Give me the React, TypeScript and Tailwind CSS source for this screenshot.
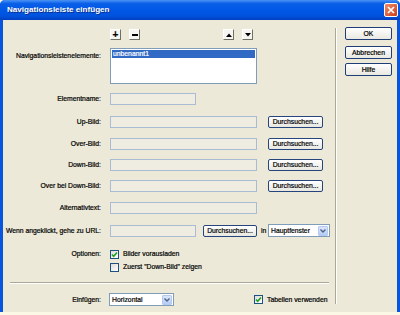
import React from 'react';

const Label: React.FC<{ text: string }> = ({ text }) => (
  <div className="w-[98px] shrink-0 text-right leading-[10px]">{text}</div>
);

const Field: React.FC<{ w: string }> = ({ w }) => (
  <div className={`h-[12px] ${w} shrink-0 border border-[#A9BCD4] bg-[#EFECE1]`} />
);

const BrowseButton: React.FC<{ className?: string }> = ({ className = '' }) => (
  <div
    className={`h-[12px] shrink-0 rounded-[2px] border border-[#27457D] bg-gradient-to-b from-white to-[#E8E7E0] text-center leading-[10px] ${className}`}
  >
    Durchsuchen...
  </div>
);

const Checkbox: React.FC<{ checked?: boolean }> = ({ checked }) => (
  <div className="flex h-[9px] w-[9px] shrink-0 items-center justify-center border border-[#1C5180] bg-gradient-to-br from-[#DCDCD7] to-white">
    {checked && (
      <svg width="7" height="7" viewBox="0 0 7 7">
        <path d="M1 3.5 L2.7 5.3 L6 1.5" fill="none" stroke="#21A121" strokeWidth="1.6" />
      </svg>
    )}
  </div>
);

const Select: React.FC<{ text: string; w: string }> = ({ text, w }) => (
  <div className={`flex h-[13px] ${w} shrink-0 items-center border border-[#7F9DB9] bg-white`}>
    <span className="flex-1 pl-[2px] leading-[10px]">{text}</span>
    <div className="mr-px flex h-[10px] w-[10px] items-center justify-center rounded-[1px] border border-[#B5C8EE] bg-gradient-to-b from-[#DCE6FC] to-[#B5CBF7]">
      <svg width="6" height="4" viewBox="0 0 6 4">
        <path d="M0.5 0.5 L3 3 L5.5 0.5" fill="none" stroke="#4D6185" strokeWidth="1.3" />
      </svg>
    </div>
  </div>
);

const SmallButton: React.FC<{ children: React.ReactNode; className?: string }> = ({ children, className = '' }) => (
  <div
    className={`flex h-[11px] w-[11px] shrink-0 items-center justify-center border-b border-r border-t border-l border-b-[#716F64] border-r-[#716F64] border-t-white border-l-white bg-[#F6F5F1] ${className}`}
  >
    {children}
  </div>
);

const DialogButton: React.FC<{ text: string; className?: string }> = ({ text, className = '' }) => (
  <div
    className={`h-[13px] w-[47px] rounded-[2px] border border-[#1F3E77] bg-gradient-to-b from-white to-[#E9E8E1] text-center leading-[11px] ${className}`}
  >
    {text}
  </div>
);

const App: React.FC = () => {
  return (
    <div className="h-[315px] w-[400px] bg-[#FBF9E6] font-['Liberation_Sans',Arial,sans-serif] text-[6.8px] text-black [-webkit-text-stroke:0.2px_currentColor]">
      <div className="flex h-[312px] flex-col overflow-hidden rounded-t-[5px] bg-[#0A55DD]">
        {/* title bar */}
        <div className="flex h-[20px] shrink-0 items-center bg-[linear-gradient(to_bottom,#4A93F5_0%,#0A5FE8_18%,#0058E6_50%,#0052DD_80%,#003FC0_100%)] pl-[7px] pr-[2px]">
          <span className="flex-1 text-[8.1px] font-bold text-white [-webkit-text-stroke:0] [text-shadow:1px_1px_0_#0B2E8A]">
            Navigationsleiste einfügen
          </span>
          <div className="flex h-[14px] w-[14px] items-center justify-center rounded-[2px] border border-white bg-gradient-to-br from-[#EE8A68] to-[#CC3C17]">
            <svg width="8" height="8" viewBox="0 0 8 8">
              <path d="M1 1 L7 7 M7 1 L1 7" stroke="white" strokeWidth="1.7" />
            </svg>
          </div>
        </div>

        {/* body */}
        <div className="mx-[3px] flex flex-1 bg-[#ECE9D8]">
          {/* left part */}
          <div className="flex w-[332px] shrink-0 flex-col">
            {/* +/- and arrows */}
            <div className="mt-[9px] flex h-[11px] items-center">
              <div className="w-[107px] shrink-0" />
              <SmallButton>
                <span className="text-[10px] font-bold leading-[10px]">+</span>
              </SmallButton>
              <SmallButton className="ml-[8px]">
                <div className="h-[2px] w-[6px] bg-black" />
              </SmallButton>
              <SmallButton className="ml-[83px]">
                <svg width="6" height="4" viewBox="0 0 6 4">
                  <path d="M0 4 L3 0.5 L6 4 Z" fill="black" />
                </svg>
              </SmallButton>
              <SmallButton className="ml-[8px]">
                <svg width="6" height="4" viewBox="0 0 6 4">
                  <path d="M0 0 L3 3.5 L6 0 Z" fill="black" />
                </svg>
              </SmallButton>
            </div>

            {/* list */}
            <div className="mt-[8px] flex">
              <div className="mt-[3px]">
                <Label text="Navigationsleistenelemente:" />
              </div>
              <div className="ml-[9px] h-[36px] w-[147px] shrink-0 border border-[#7F9DB9] bg-white p-px">
                <div className="h-[8px] bg-[#316AC5] pl-px leading-[8px] text-white">unbenannt1</div>
              </div>
            </div>

            {/* Elementname */}
            <div className="mt-[9px] flex items-center">
              <Label text="Elementname:" />
              <div className="ml-[9px]">
                <Field w="w-[86px]" />
              </div>
            </div>

            {[
              { label: 'Up-Bild:', mt: 'mt-[11px]' },
              { label: 'Over-Bild:', mt: 'mt-[10px]' },
              { label: 'Down-Bild:', mt: 'mt-[9px]' },
              { label: 'Over bei Down-Bild:', mt: 'mt-[9px]' },
            ].map(row => (
              <div key={row.label} className={`${row.mt} flex items-center`}>
                <Label text={row.label} />
                <div className="ml-[9px]">
                  <Field w="w-[147px]" />
                </div>
                <BrowseButton className="ml-[11px] w-[55px]" />
              </div>
            ))}

            {/* Alternativtext */}
            <div className="mt-[10px] flex items-center">
              <Label text="Alternativtext:" />
              <div className="ml-[9px]">
                <Field w="w-[147px]" />
              </div>
            </div>

            {/* URL */}
            <div className="mt-[10px] flex items-center">
              <Label text="Wenn angeklickt, gehe zu URL:" />
              <div className="ml-[9px]">
                <Field w="w-[86px]" />
              </div>
              <BrowseButton className="ml-[7px] w-[54px]" />
              <span className="ml-[4px] w-[7px] leading-[10px]">in</span>
              <Select text="Hauptfenster" w="w-[62px]" />
            </div>

            {/* Optionen */}
            <div className="mt-[12px] flex items-center">
              <Label text="Optionen:" />
              <div className="ml-[9px]">
                <Checkbox checked />
              </div>
              <span className="ml-[4px] leading-[10px]">Bilder vorausladen</span>
            </div>
            <div className="mt-[3px] flex items-center">
              <div className="w-[107px] shrink-0" />
              <Checkbox />
              <span className="ml-[4px] leading-[10px]">Zuerst "Down-Bild" zeigen</span>
            </div>

            {/* separator */}
            <div className="ml-[7px] mt-[10px] w-[319px] border-b border-t border-b-white border-t-[#ACA899]" />

            {/* Einfügen */}
            <div className="mt-[9px] flex items-center">
              <Label text="Einfügen:" />
              <div className="ml-[8px]">
                <Select text="Horizontal" w="w-[65px]" />
              </div>
              <div className="ml-[80px]">
                <Checkbox checked />
              </div>
              <span className="ml-[4px] leading-[10px]">Tabellen verwenden</span>
            </div>
          </div>

          {/* vertical separator */}
          <div className="my-[8px] flex shrink-0">
            <div className="w-px bg-[#ACA899]" />
            <div className="w-px bg-white" />
          </div>

          {/* right buttons */}
          <div className="ml-[8px] mt-[7px] flex flex-col">
            <DialogButton text="OK" />
            <DialogButton text="Abbrechen" className="mt-[6px]" />
            <DialogButton text="Hilfe" className="mt-[4px]" />
          </div>
        </div>
      </div>
    </div>
  );
};

export default App;
